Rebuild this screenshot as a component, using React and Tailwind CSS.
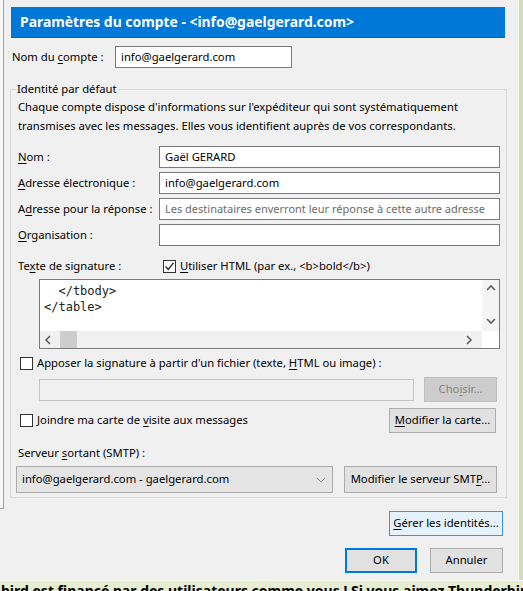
import { useState } from 'react';

const ui = { fontFamily: '"Noto Sans", "Liberation Sans", sans-serif' };

function U({ children }) {
    return <span className="underline underline-offset-2">{children}</span>;
}

function Checkbox({ checked }) {
    return (
        <span className="flex h-[13px] w-[13px] shrink-0 items-center justify-center border border-[#333333] bg-white">
            {checked && (
                <svg width="11" height="11" viewBox="0 0 11 11" aria-hidden="true">
                    <path d="M1.5 5.5l2.8 3L9.5 1.8" fill="none" stroke="#222222" strokeWidth="1.3" />
                </svg>
            )}
        </span>
    );
}

function Chevron({ dir }) {
    const paths = {
        up: 'M1 6l4-4 4 4',
        down: 'M1 2l4 4 4-4',
        left: 'M6 1L2 5l4 4',
        right: 'M2 1l4 4-4 4',
    };
    return (
        <svg width="10" height="10" viewBox="0 0 10 10" aria-hidden="true">
            <path d={paths[dir]} fill="none" stroke="#606060" strokeWidth="1.6" />
        </svg>
    );
}

function Button({ children, className = '' }) {
    return (
        <button className={`flex h-[25px] items-center justify-center whitespace-nowrap border border-[#adadad] bg-[#e1e1e1] text-[11.25px] text-black ${className}`}>
            {children}
        </button>
    );
}

function Field({ label, value, placeholder }) {
    return (
        <div className="flex h-[22px] items-center whitespace-nowrap">
            <span className="w-[141px] shrink-0">{label}</span>
            <div className="flex h-[22px] w-[341px] items-center overflow-hidden border border-[#7a7a7a] bg-white pl-[5px]">
                {value ? <span>{value}</span> : <span className="text-[11px] text-[#6d6d6d]">{placeholder}</span>}
            </div>
        </div>
    );
}

export default function App() {
    const [useHtml] = useState(true);

    return (
        <div className="flex h-[591px] w-[523px] flex-col overflow-hidden bg-[#f0f0f0] text-[11.25px] text-black" style={ui}>
            <div className="flex h-[580px]">
                <div className="h-[509px] w-[4px] shrink-0 border-r border-b border-[#a0a0a0] bg-[#f7f7f7]" />

                <div className="flex flex-1 flex-col pl-[6px]">
                    <div className="ml-[1px] mt-[7px] flex h-[31px] w-[494px] items-center border-b border-[#1b5fa3] bg-[#0078d7] pl-[9px] text-[13.9px] font-bold text-white">
                        Paramètres du compte - &lt;info@gaelgerard.com&gt;
                    </div>

                    <div className="mt-[8px] flex h-[22px] items-center whitespace-nowrap">
                        <span className="w-[105px] shrink-0 pl-[2px]">
                            Nom du <U>c</U>ompte :
                        </span>
                        <div className="flex h-[22px] w-[177px] items-center border border-[#7a7a7a] bg-white pl-[5px]">info@gaelgerard.com</div>
                    </div>

                    <fieldset className="mt-[13px] w-[497px] border border-[#d9d9d9] pb-[4px] pl-[7px] pr-[6px]">
                        <legend className="ml-[-2px] px-[1px] leading-[16px]">Identité par défaut</legend>

                        <p className="leading-[19px]">
                            Chaque compte dispose d'informations sur l'expéditeur qui sont systématiquement
                            <br />
                            transmises avec les messages. Elles vous identifient auprès de vos correspondants.
                        </p>

                        <div className="mt-[11px] flex flex-col gap-[4px]">
                            <Field label={<><U>N</U>om :</>} value="Gaël GERARD" />
                            <Field label={<><U>A</U>dresse électronique :</>} value="info@gaelgerard.com" />
                            <Field label={<>A<U>d</U>resse pour la réponse :</>} placeholder="Les destinataires enverront leur réponse à cette autre adresse" />
                            <Field label={<><U>O</U>rganisation :</>} />
                        </div>

                        <div className="mt-[12px] flex h-[16px] items-center whitespace-nowrap">
                            <span className="w-[145px] shrink-0">
                                Te<U>x</U>te de signature :
                            </span>
                            <Checkbox checked={useHtml} />
                            <span className="ml-[4px]">
                                <U>U</U>tiliser HTML (par ex., &lt;b&gt;bold&lt;/b&gt;)
                            </span>
                        </div>

                        <div className="ml-[21px] mt-[5px] flex h-[70px] flex-col border border-[#7a7a7a] bg-white">
                            <div className="flex flex-1">
                                <pre className="flex-1 pl-[4px] pt-[3px] text-[12px] leading-[16px] text-[#222222]" style={{ fontFamily: '"DejaVu Sans Mono", monospace' }}>
                                    {'  </tbody>\n</table>'}
                                </pre>
                                <div className="flex w-[17px] flex-col items-center justify-between bg-[#f4f4f4] py-[4px]">
                                    <Chevron dir="up" />
                                    <Chevron dir="down" />
                                </div>
                            </div>
                            <div className="flex h-[17px]">
                                <div className="flex flex-1 items-center bg-[#f0f0f0] pl-[4px] pr-[7px]">
                                    <Chevron dir="left" />
                                    <span className="ml-[6px] h-[17px] w-[17px] bg-[#cdcdcd]" />
                                    <span className="ml-auto">
                                        <Chevron dir="right" />
                                    </span>
                                </div>
                                <div className="w-[17px] bg-white" />
                            </div>
                        </div>

                        <div className="ml-[2px] mt-[6px] flex h-[16px] items-center whitespace-nowrap">
                            <Checkbox />
                            <span className="ml-[4px]">
                                Apposer la signature à partir d'un fichier (texte, <U>H</U>TML ou image) :
                            </span>
                        </div>

                        <div className="mt-[6px] flex h-[25px] items-center">
                            <div className="ml-[21px] h-[22px] w-[375px] border border-[#c4c4c4] bg-[#f0f0f0]" />
                            <button className="ml-auto mr-[3px] flex h-[25px] w-[73px] items-center justify-center border border-[#bfbfbf] bg-[#cccccc] text-[11.25px] text-[#838383]">
                                Cho<U>i</U>sir...
                            </button>
                        </div>

                        <div className="mt-[6px] flex h-[25px] items-center whitespace-nowrap">
                            <span className="ml-[2px]">
                                <Checkbox />
                            </span>
                            <span className="ml-[4px]">
                                Joindre ma carte de <U>v</U>isite aux messages
                            </span>
                            <Button className="ml-auto mr-[4px] w-[107px]">
                                <span>
                                    <U>M</U>odifier la carte...
                                </span>
                            </Button>
                        </div>

                        <div className="mt-[12px] h-[16px] leading-[16px]">
                            Serveur <U>s</U>ortant (SMTP) :
                        </div>

                        <div className="mt-[5px] flex h-[27px] items-center whitespace-nowrap">
                            <div className="ml-[-2px] flex h-[27px] w-[317px] items-center border border-[#acacac] bg-[#e5e5e5] pl-[5px] pr-[6px]">
                                <span className="flex-1">info@gaelgerard.com - gaelgerard.com</span>
                                <svg width="10" height="6" viewBox="0 0 10 6" aria-hidden="true">
                                    <path d="M1 1l4 4 4-4" fill="none" stroke="#8a8a8a" strokeWidth="1" />
                                </svg>
                            </div>
                            <Button className="ml-auto mr-[3px] h-[27px] w-[153px]">
                                <span>
                                    Modifier le serveur SMT<U>P</U>...
                                </span>
                            </Button>
                        </div>
                    </fieldset>

                    <div className="mt-[13px] flex w-[493px] justify-end">
                        <button className="flex h-[25px] w-[114px] items-center justify-center whitespace-nowrap border border-[#3f95dd] bg-[#e5f1fb] text-[11.25px]">
                            <span>
                                <U>G</U>érer les identités...
                            </span>
                        </button>
                    </div>

                    <div className="mt-[12px] flex w-[493px] justify-end gap-[13px]">
                        <button className="flex h-[25px] w-[72px] items-center justify-center border-2 border-[#0078d7] bg-[#e1e1e1] text-[11.25px]">OK</button>
                        <Button className="w-[73px]">Annuler</Button>
                    </div>
                </div>

                <div className="w-[5px] shrink-0 border-l border-[#fafafa] bg-[#d3ddb9]" />
            </div>

            <div className="h-[11px] overflow-hidden whitespace-nowrap border-t border-[#f4f7ea] bg-[#e6edd2] pl-[1px] pt-[1px] text-[14px] font-bold leading-[18px] text-black">
                bird est financé par des utilisateurs comme vous ! Si vous aimez Thunderbird
            </div>
        </div>
    );
}
